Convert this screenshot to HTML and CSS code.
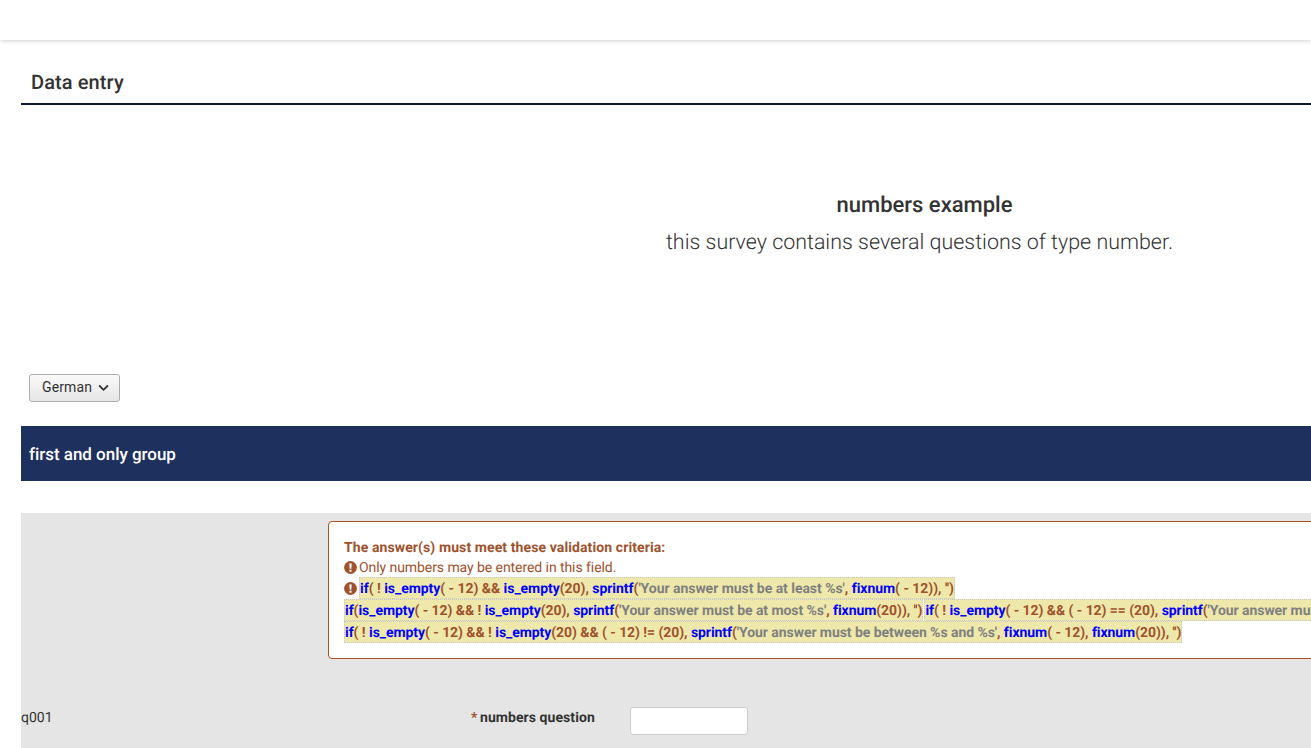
FILE: index.html
```html
<!DOCTYPE html>
<html lang="en">
<head>
<meta charset="utf-8">
<title>Data entry</title>
<link rel="stylesheet" href="styles.css">
</head>
<body>
<header class="topbar"></header>
<main class="page">
  <h1 class="page-title">Data entry</h1>
  <section class="welcome">
    <h2 class="welcome-name">numbers example</h2>
    <p class="welcome-desc">this survey contains several questions of type number.</p>
  </section>
  <div class="lang-row">
    <button class="lang-btn" type="button">German
      <svg class="chev" viewBox="0 0 12 8" width="11" height="8"><path d="M1.2 1.3 6 6l4.8-4.7" fill="none" stroke="#333" stroke-width="2"/></svg>
    </button>
  </div>
  <div class="group-bar">first and only group</div>
  <section class="question">
    <div class="tip-row">
      <div class="tip">
        <div class="tip-title">The answer(s) must meet these validation criteria:</div>
        <div class="tip-line tip-plain">
          <svg class="warn" viewBox="0 0 14 14" width="13" height="13"><circle cx="7" cy="7" r="6.9" fill="#a0522d"/><path d="M5.7 2.6h2.6L7.9 8.4H6.1zM5.9 9.4h2.2v2.1H5.9z" fill="#fff"/></svg>
          Only numbers may be entered in this field.
        </div>
        <div class="tip-line">
          <svg class="warn" viewBox="0 0 14 14" width="13" height="13"><circle cx="7" cy="7" r="6.9" fill="#a0522d"/><path d="M5.7 2.6h2.6L7.9 8.4H6.1zM5.9 9.4h2.2v2.1H5.9z" fill="#fff"/></svg>
          <span class="em em-loose"><b class="k">if</b>( ! <b class="k">is_empty</b>( - 12) &amp;&amp; <b class="k">is_empty</b>(20), <b class="k">sprintf</b>(<i class="s">'Your answer must be at least %s'</i>, <b class="k">fixnum</b>( - 12)), '')</span>
        </div>
        <div class="tip-code">
          <span class="em"><b class="k">if</b>(<b class="k">is_empty</b>( - 12) &amp;&amp; ! <b class="k">is_empty</b>(20), <b class="k">sprintf</b>(<i class="s">'Your answer must be at most %s'</i>, <b class="k">fixnum</b>(20)), '')</span>
          <span class="em"><b class="k">if</b>( ! <b class="k">is_empty</b>( - 12) &amp;&amp; ( - 12) == (20), <b class="k">sprintf</b>(<i class="s">'Your answer must be equal to %s'</i>, <b class="k">fixnum</b>(20)), '')</span>
        </div>
        <div class="tip-code">
          <span class="em"><b class="k">if</b>( ! <b class="k">is_empty</b>( - 12) &amp;&amp; ! <b class="k">is_empty</b>(20) &amp;&amp; ( - 12) != (20), <b class="k">sprintf</b>(<i class="s">'Your answer must be between %s and %s'</i>, <b class="k">fixnum</b>( - 12), <b class="k">fixnum</b>(20)), '')</span>
        </div>
      </div>
    </div>
    <div class="answer-row">
      <div class="qcode">q001</div>
      <label class="qtext"><span class="req">*</span> numbers question</label>
      <input class="qinput" type="text">
    </div>
  </section>
</main>
</body>
</html>
```
FILE: styles.css
```css
* { box-sizing: border-box; }
html, body { margin: 0; height: 748px; overflow: hidden; background: #fff; }
body { font-family: Roboto, "Liberation Sans", sans-serif; color: #333; text-rendering: geometricPrecision; }
.topbar { height: 40px; background: #fff; box-shadow: 0 1px 4px rgba(0,0,0,.18); }
.page { width: 1818px; padding-left: 21px; }
.page-title { margin: 0; height: 65px; padding: 29px 0 0 10px; font-size: 20px; line-height: 26px; font-weight: 500; letter-spacing: .1px; color: #333; border-bottom: 2px solid #0b1b3b; }
.welcome { height: 269px; padding-top: 86px; text-align: center; }
.welcome-name { margin: 0; padding-left: 10px; font-size: 22px; line-height: 30px; font-weight: 500; color: #333; }
.welcome-desc { margin: 8px 0 0; font-size: 21.44px; line-height: 28px; font-weight: 300; color: #333; }
.lang-row { padding-left: 8px; height: 52px; }
.lang-btn { width: 91px; height: 28px; padding: 0 0 2px 2px; display: flex; align-items: center; justify-content: center; gap: 6px; font: 400 14px Roboto, sans-serif; letter-spacing: .1px; color: #333; background: linear-gradient(#fafafa, #e6e6e6); border: 1px solid #adadad; border-radius: 3px; }
.chev { margin-top: 1px; }
.group-bar { height: 55px; padding-left: 8px; background: #1e305d; color: #fff; font-size: 17px; font-weight: 500; line-height: 59px; letter-spacing: -.03px; }
.question { margin-top: 32px; height: 300px; background: #e5e5e5; padding-top: 8px; }
.tip-row { padding-left: 307px; }
.tip { height: 138px; padding: 15px 15px 0; background: #fff; border: 1px solid #a9531f; border-radius: 4px; color: #a0522d; font-size: 14px; line-height: 20px; white-space: nowrap; }
.tip-title { font-weight: 700; height: 20px; padding-top: 1px; letter-spacing: .1px; }
.tip-line { height: 22px; display: flex; align-items: center; }
.tip-plain { height: 20px; padding-top: 2px; letter-spacing: -.07px; }
.tip-plain .warn { margin-top: -2px; }
.warn { margin-right: 2px; flex: none; }
.tip-code { height: 22px; display: flex; gap: 1px; }
.em { display: inline-block; height: 22px; padding: 1px 1px 0; line-height: 22px; letter-spacing: -.06px; background: #eee8aa; outline: 1px dotted #c9c9c9; outline-offset: -1px; font-weight: 700; }
.em-loose { letter-spacing: -.04px; }
.k { color: #0000ff; font-weight: 700; }
.s { color: #808080; font-style: normal; font-weight: 700; }
.answer-row { display: flex; align-items: flex-start; height: 28px; margin-top: 48px; font-size: 14px; line-height: 20px; }
.qcode { width: 450px; padding-top: 1px; }
.qtext { width: 159px; padding-top: 1px; font-weight: 700; letter-spacing: .07px; }
.req { margin-right: -1px; color: #a0522d; }
.qinput { width: 118px; height: 28px; background: #fff; border: 1px solid #ccc; border-radius: 3px; }
```
